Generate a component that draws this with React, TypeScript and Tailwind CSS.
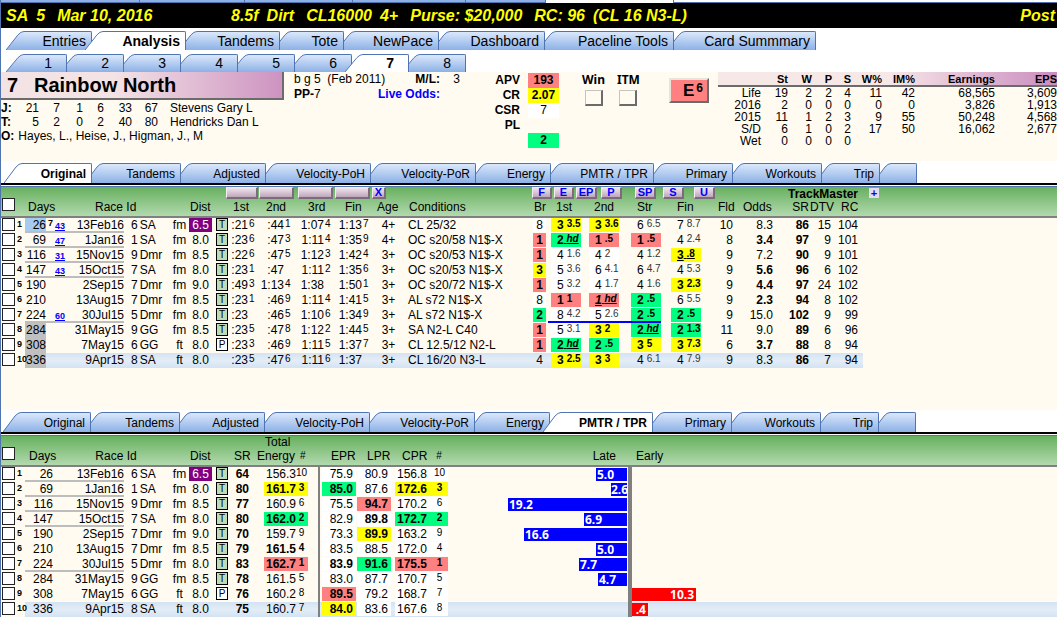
import React from "react";

const NAVY = "#4f74b0";

type TabDef = { label: string; width: string };

function Tabs({ tabs, active, size, name, textPad }: { tabs: TabDef[]; active: string; size: string; name: string; textPad: string }) {
  return (
    <nav aria-label={name} className="flex">
      {tabs.map((t, i) => {
        const on = t.label === active;
        return (
          <button
            key={i}
            type="button"
            aria-label={t.label || "More"}
            className={`relative flex shrink-0 ${i ? "-ml-[7px]" : ""} ${size} ${t.width} ${on ? "font-bold" : ""}`}
            style={{ zIndex: on ? 30 : 20 - i }}
          >
            <svg className="h-full w-[18px] shrink-0" viewBox="0 0 18 20" preserveAspectRatio="none" aria-hidden="true">
              <defs>
                <linearGradient id={`${name}-${i}`} x1="0" y1="0" x2="0" y2="1">
                  <stop offset="0" stopColor={on ? "#ffffff" : "#dbe8fb"} />
                  <stop offset="1" stopColor={on ? "#ffffff" : "#8db1e6"} />
                </linearGradient>
              </defs>
              <path d="M0 20 L12 4 Q15 .5 18 .5 V20 Z" fill={`url(#${name}-${i})`} />
              <path d="M0 20 L12 4 Q15 .5 18 .5" fill="none" stroke={NAVY} strokeWidth="1" />
            </svg>
            <span
              className={`flex h-full flex-1 items-center justify-end whitespace-nowrap rounded-tr-[2px] border-r border-t border-[#4f74b0] ${textPad} ${
                on ? "bg-white" : "bg-gradient-to-b from-[#dbe8fb] to-[#8db1e6]"
              }`}
            >
              {t.label}
            </span>
          </button>
        );
      })}
    </nav>
  );
}

const mainTabs: TabDef[] = [
  { label: "Entries", width: "w-[86px]" },
  { label: "Analysis", width: "w-[101px]" },
  { label: "Tandems", width: "w-[101px]" },
  { label: "Tote", width: "w-[71px]" },
  { label: "NewPace", width: "w-[102px]" },
  { label: "Dashboard", width: "w-[113px]" },
  { label: "Paceline Tools", width: "w-[136px]" },
  { label: "Card Summmary", width: "w-[149px]" },
];

const horseTabs: TabDef[] = ["1", "2", "3", "4", "5", "6", "7", "8"].map((n, i) => ({ label: n, width: i ? "w-[64px]" : "w-[61px]" }));

const viewTabs: TabDef[] = [
  { label: "Original", width: "w-[88px]" },
  { label: "Tandems", width: "w-[96px]" },
  { label: "Adjusted", width: "w-[92px]" },
  { label: "Velocity-PoH", width: "w-[112px]" },
  { label: "Velocity-PoR", width: "w-[112px]" },
  { label: "Energy", width: "w-[82px]" },
  { label: "PMTR / TPR", width: "w-[110px]" },
  { label: "Primary", width: "w-[86px]" },
  { label: "Workouts", width: "w-[96px]" },
  { label: "Trip", width: "w-[65px]" },
  { label: "", width: "w-[44px]" },
];

type Tone = "r" | "g" | "y" | "w" | "";
const toneClass: Record<Tone, string> = {
  r: "bg-[#ff8080] font-bold",
  g: "bg-[#00ff80] font-bold",
  y: "bg-[#ffff00] font-bold",
  w: "bg-white",
  "": "",
};

type Race = {
  days: string;
  note: string;
  date: string;
  trk: string;
  surf: string;
  dist: string;
  kind: string;
  times: string[];
  age: string;
  cond: string;
  calls: string[];
  fld: string;
  odds: string;
  sr: string;
  dtv: string;
  rc: string;
  line: boolean;
};

function race(s: string): Race {
  const [days, note, date, trk, surf, dist, kind, times, age, cond, calls, fld, odds, sr, dtv, rc, line] = s.split("|");
  return { days, note, date, trk, surf, dist, kind, times: times.split(","), age, cond, calls: calls.split(","), fld, odds, sr, dtv, rc, line: line === "1" };
}

// Calls are written as tone:position:lengths, with an optional fourth part for underlining.
const races: Race[] = [
  "26|43|13Feb16|6 SA|fm|6.5|T|:21 6,:44 1,1:07 4,1:13 7|4+|CL 25/32|w:8,y:3:3.5,y:3:3.6,:6:6.5,:7:8.7|10|8.3|86|15|104|1",
  "69|47|1Jan16|1 SA|fm|8.0|T|:23 6,:47 3,1:11 4,1:35 9|4+|OC s20/58 N1$-X|r:1,g:2:hd:u,r:1:.5,r:1:.5,:4:2.4|8|*3.4|97|9|101|1",
  "116|31|15Nov15|9 Dmr|fm|8.5|T|:22 6,:47 5,1:12 3,1:42 4|3+|OC s20/53 N1$-X|r:1,w:4:1.6,w:4:2,:4:1.2,y:3:.8:n|9|7.2|90|9|101|1",
  "147|43|15Oct15|7 SA|fm|8.0|T|:23 1,:47 ,1:11 2,1:35 6|3+|OC s20/53 N1$-X|y:3,w:5:3.6,w:6:4.1,:6:4.7,:4:5.3|9|*5.6|96|6|102|1",
  "190||2Sep15|7 Dmr|fm|9.0|T|:49 3,1:13 4,1:38 ,1:50 1|3+|OC s20/72 N1$-X|r:1,w:5:3.2,w:4:1.7,:4:1.6,y:3:2.3|9|*4.4|97|24|102|",
  "210||13Aug15|7 Dmr|fm|8.5|T|:23 1,:46 9,1:11 4,1:41 5|3+|AL s72 N1$-X|w:8,r:1:1,r:1:hd:i,g:2:.5,:6:5.5|9|*2.3|94|8|102|",
  "224|60|30Jul15|5 Dmr|fm|8.0|T|:23 ,:46 5,1:10 6,1:34 9|3+|AL s72 N1$-X|g:2,w:8:4.2,w:5:2.6,g:2:.5,g:2:.5|9|15.0|102|9|99|1",
  "284||31May15|9 GG|fm|8.5|T|:23 5,:47 8,1:12 2,1:44 5|3+|SA N2-L C40|r:1,w:5:3.1,y:3:2,g:2:hd:u,g:2:1.3|11|9.0|89|6|96|",
  "308||7May15|6 GG|ft|8.0|P|:23 3,:46 9,1:11 5,1:37 7|3+|CL 12.5/12 N2-L|r:1,g:2:hd:u,g:2:.5,y:3:5,y:3:7.3|6|*3.7|88|8|94|",
  "336||9Apr15|8 SA|ft|8.0||:23 5,:47 6,1:11 6,1:37 |3+|CL 16/20 N3-L|:4,y:3:2.5,y:3:3,:4:6.1,:4:7.9|9|8.3|86|7|94|",
].map(race);

type Fig = { sr: string; te: string; rk: string; tt: Tone; tb?: boolean; epr: string; et: Tone; eb?: boolean; lpr: string; lt: Tone; lb?: boolean; cpr: string; ct: Tone; cr: string; late?: string; early?: string };
const figs: Fig[] = [
  { sr: "64", te: "156.3", rk: "10", tt: "", epr: "75.9", et: "w", lpr: "80.9", lt: "w", cpr: "156.8", ct: "w", cr: "10", late: "5.0" },
  { sr: "80", te: "161.7", rk: "3", tt: "y", epr: "85.0", et: "g", lpr: "87.6", lt: "w", cpr: "172.6", ct: "y", cr: "3", late: "2.6" },
  { sr: "77", te: "160.9", rk: "6", tt: "", epr: "75.5", et: "w", lpr: "94.7", lt: "r", cpr: "170.2", ct: "w", cr: "6", late: "19.2" },
  { sr: "80", te: "162.0", rk: "2", tt: "g", epr: "82.9", et: "w", lpr: "89.8", lt: "w", lb: true, cpr: "172.7", ct: "g", cr: "2", late: "6.9" },
  { sr: "70", te: "159.7", rk: "9", tt: "", epr: "73.3", et: "w", lpr: "89.9", lt: "y", cpr: "163.2", ct: "w", cr: "9", late: "16.6" },
  { sr: "79", te: "161.5", rk: "4", tt: "", tb: true, epr: "83.5", et: "w", lpr: "88.5", lt: "w", cpr: "172.0", ct: "w", cr: "4", late: "5.0" },
  { sr: "83", te: "162.7", rk: "1", tt: "r", epr: "83.9", et: "w", eb: true, lpr: "91.6", lt: "g", cpr: "175.5", ct: "r", cr: "1", late: "7.7" },
  { sr: "78", te: "161.5", rk: "5", tt: "", epr: "83.0", et: "w", lpr: "87.7", lt: "w", cpr: "170.7", ct: "w", cr: "5", late: "4.7" },
  { sr: "76", te: "160.2", rk: "8", tt: "", epr: "89.5", et: "r", lpr: "79.2", lt: "w", cpr: "168.7", ct: "w", cr: "7", early: "10.3" },
  { sr: "75", te: "160.7", rk: "7", tt: "", epr: "84.0", et: "y", lpr: "83.6", lt: "w", cpr: "167.6", ct: "w", cr: "8", early: ".4" },
];

const STRIPE = "bg-gradient-to-b from-[#d3e3f3] via-[#e4edf7] to-[#d3e3f3]";

function Check({ label }: { label: string }) {
  return <input type="checkbox" aria-label={label} className="ml-px block size-[13px] appearance-none border border-[#222] bg-white checked:bg-[#4f74b0]" />;
}

function Td({ children, line = "", className = "", stripe = false }: { children?: React.ReactNode; line?: string; className?: string; stripe?: boolean }) {
  return (
    <td className={`whitespace-nowrap p-0 align-top leading-[15px] ${line ? `border-b-2 ${line}` : ""} ${stripe ? STRIPE : ""} ${className}`}>
      <div className={line ? "h-[13px]" : "h-[15px]"}>{children}</div>
    </td>
  );
}

const GREY_LINE = "border-[#bdbdbd]";

function LeadCells({ r, i, stripe, notes }: { r: Race; i: number; stripe: boolean; notes: boolean }) {
  const line = r.line ? GREY_LINE : "";
  const shade = notes ? (i === 0 ? "bg-[#a6caf0]" : i >= 7 ? "bg-[#c0c0c0]" : "") : "";
  return (
    <>
      <Td><Check label={`Select race ${i + 1}`} /></Td>
      <Td className="text-[9px] font-bold"><span className="relative ml-px block leading-[13px]">{i + 1}</span></Td>
      <Td line={line} stripe={stripe} className="text-right"><span className={`block h-full ${shade}`}>{r.days}</span></Td>
      {notes && (
        <Td line={line} stripe={stripe}>
          <span className="flex h-full items-start justify-between pl-0.5 pr-0.5">
            <sup className="top-0 text-[9px] font-bold leading-[11px]">{i === 0 ? "7" : ""}</sup>
            {r.note && <a href="#related" className="pt-1 text-[9px] font-bold leading-[9px] text-[#0000ff] underline">{r.note}</a>}
          </span>
        </Td>
      )}
      <Td line={line} stripe={stripe} className="text-right">{r.date}</Td>
      <Td stripe={stripe}>
        <span className="flex gap-0.5 pl-[7px]"><span>{r.trk.split(" ")[0]}</span><span>{r.trk.split(" ")[1]}</span></span>
      </Td>
      <Td stripe={stripe} className="text-center">{r.surf}</Td>
      <Td stripe={stripe}>
        <span className={`mx-px block text-center ${r.dist === "6.5" ? "h-[14px] bg-[#800080] text-white" : ""}`}>{r.dist}</span>
      </Td>
      <Td stripe={stripe}>
        {r.kind && (
          <span className={`ml-[3px] block h-[13px] w-3 border border-black text-center text-[10px] leading-[11px] ${r.kind === "T" ? "bg-[#bcdcb8]" : "bg-white"}`}>{r.kind}</span>
        )}
      </Td>
    </>
  );
}

function Time({ t, w }: { t: string; w: string }) {
  const [a, b] = t.split(" ");
  return (
    <span className="flex">
      <span className={`text-right ${w}`}>{a}</span>
      <sup className="top-0 ml-px text-[10px] leading-[12px]">{b}</sup>
    </span>
  );
}

function Call({ c, line, pad }: { c: string; line: boolean; pad: string }) {
  const [tone, main, len, u] = c.split(":");
  const underline = u ? "underline" : "";
  return (
    <span className={`block h-full ${pad}`}>
      <span className={`flex w-[30px] pl-1.5 ${line ? "h-[13px]" : "h-[14px]"} ${toneClass[tone as Tone]}`}>
        <span className={u === "i" ? "italic underline" : u === "n" ? "underline" : ""}>{main}</span>
        <sup className={`top-0 whitespace-pre text-[10px] leading-[12px] ${underline} ${len === "hd" ? "italic" : ""} ${u ? "" : "ml-[3px]"} ${tone && tone !== "w" ? "text-black" : "text-[#333]"}`}>
          {u ? " " : ""}{len}
        </sup>
      </span>
    </span>
  );
}

function Th({ children, className = "", span = 1 }: { children?: React.ReactNode; className?: string; span?: number }) {
  return <th scope="col" colSpan={span} className={`h-[18px] whitespace-nowrap border-b-2 border-[#808080] p-0 text-left align-top font-normal leading-[14px] ${className}`}>{children}</th>;
}

function Chip({ children, className = "", label }: { children?: React.ReactNode; className?: string; label: string }) {
  return (
    <button type="button" aria-label={label} className={`flex h-3 shrink-0 items-center justify-center border-b-2 border-r-2 border-l border-t border-b-[#7b6b7b] border-r-[#7b6b7b] border-l-[#f4eef4] border-t-[#f4eef4] bg-gradient-to-b from-[#f0e6ee] to-[#bfa6bb] text-[11px] font-bold leading-[9px] text-[#0000ff] ${className}`}>
      {children}
    </button>
  );
}

const TABLE = "w-full table-fixed border-separate border-spacing-0";
const THEAD = "bg-gradient-to-b from-[#66b05e] to-[#b7dcb3]";

function OriginalTable() {
  const cols = ["w-[15px]", "w-[9px]", "w-[21px]", "w-[21px]", "w-[57px]", "w-[47px]", "w-[17px]", "w-[25px]", "w-[16px]", "w-[27px]", "w-[40px]", "w-[39px]", "w-[40px]", "w-[27px]", "w-[130px]", "w-[16px]", "w-[36px]", "w-[37px]", "w-[40px]", "w-[45px]", "w-[27px]", "w-[41px]", "w-[35px]", "w-[22px]", "w-[32px]", ""];
  const callPads = ["pl-[3px]", "pl-[5px]", "pl-[10px]", "pl-[10px]"];
  return (
    <table className={TABLE}>
      <colgroup>{cols.map((c, i) => <col key={i} className={c} />)}</colgroup>
      <thead className={THEAD}>
        <tr>
          <th rowSpan={2} className="border-b-2 border-[#808080] p-0 pt-1.5 align-middle"><Check label="Select all races" /></th>
          <th colSpan={25} className="h-[13px] p-0 align-top font-bold">
            <div className="flex h-[13px] items-start pl-[210px]">
              <Chip label="Sort by first fraction" className="w-8" />
              <Chip label="Sort by second fraction" className="ml-px w-[35px]" />
              <Chip label="Sort by third fraction" className="ml-1 w-[35px]" />
              <Chip label="Sort by final time" className="ml-0.5 w-[35px]" />
              <Chip label="X" className="ml-0.5 w-3.5">X</Chip>
              <Chip label="F" className="ml-[146px] w-5">F</Chip>
              <Chip label="E" className="ml-0.5 w-5">E</Chip>
              <Chip label="EP" className="ml-0.5 w-[21px]">EP</Chip>
              <Chip label="P" className="ml-1 w-[21px]">P</Chip>
              <Chip label="SP" className="ml-[13px] w-[21px]">SP</Chip>
              <Chip label="S" className="ml-[7px] w-[21px]">S</Chip>
              <Chip label="U" className="ml-2.5 w-[21px]">U</Chip>
              <span className="ml-[73px] leading-[15px]">TrackMaster</span>
              <button type="button" aria-label="Add column" className="ml-[11px] mt-px flex size-[10px] items-center justify-center bg-[#e4dcec] text-[11px] font-bold leading-none text-[#0000ff]">+</button>
            </div>
          </th>
        </tr>
        <tr>
          <Th />
          <Th span={2} className="pl-[3px]">Days</Th>
          <Th span={2} className="pl-7">Race Id</Th>
          <Th />
          <Th className="pl-0.5">Dist</Th>
          <Th />
          <Th className="pl-1">1st</Th>
          <Th className="pl-2.5">2nd</Th>
          <Th className="pl-3">3rd</Th>
          <Th className="pl-2.5">Fin</Th>
          <Th className="pl-0.5">Age</Th>
          <Th className="pl-[7px]">Conditions</Th>
          <Th className="pl-0.5">Br</Th>
          <Th className="pl-2">1st</Th>
          <Th className="pl-2.5">2nd</Th>
          <Th className="pl-4">Str</Th>
          <Th className="pl-4">Fin</Th>
          <Th className="pl-3">Fld</Th>
          <Th className="pl-2.5">Odds</Th>
          <Th className="text-right">SR</Th>
          <Th className="pl-px">DTV</Th>
          <Th className="pl-2.5">RC</Th>
          <Th />
        </tr>
      </thead>
      <tbody>
        {races.map((r, i) => {
          const stripe = i === 9;
          const blue = i === 6 ? "border-[#0000ff]" : "";
          const [bt, bv] = r.calls[0].split(":");
          const best = r.odds.startsWith("*");
          return (
            <tr key={i}>
              <LeadCells r={r} i={i} stripe={stripe} notes />
              <Td stripe={stripe}><Time t={r.times[0]} w="w-[19px]" /></Td>
              <Td stripe={stripe}><Time t={r.times[1]} w="w-7" /></Td>
              <Td stripe={stripe}><Time t={r.times[2]} w="w-7" /></Td>
              <Td stripe={stripe}><Time t={r.times[3]} w="w-[27px]" /></Td>
              <Td stripe={stripe} className="text-center">{r.age}</Td>
              <Td stripe={stripe} className="pl-1.5">{r.cond}</Td>
              <Td stripe={stripe}><span className={`ml-px block h-[14px] w-[13px] text-center ${toneClass[bt as Tone]}`}>{bv}</span></Td>
              {r.calls.slice(1).map((c, k) => (
                <Td key={k} stripe={stripe} line={k < 3 ? blue : ""}><Call c={c} line={k < 3 && blue !== ""} pad={callPads[k]} /></Td>
              ))}
              <Td stripe={stripe} className="text-right">{r.fld}</Td>
              <Td stripe={stripe} className={`pr-px text-right ${best ? "font-bold" : ""}`}>{r.odds.replace("*", "")}</Td>
              <Td stripe={stripe} className="text-right font-bold">{r.sr}</Td>
              <Td stripe={stripe} className="text-right">{r.dtv}</Td>
              <Td stripe={stripe} className="pr-[5px] text-right">{r.rc}</Td>
              <Td />
            </tr>
          );
        })}
      </tbody>
    </table>
  );
}

function barWidth(v: string) {
  return `${Math.max(16, Math.round(Number(v) * 6.2))}px`;
}

const BAR_TEXT = "font-['Noto_Sans'] text-[12px] font-bold leading-[13px] text-white";

function EnergyTable() {
  const cols = ["w-[15px]", "w-[9px]", "w-[28px]", "w-[71px]", "w-[47px]", "w-[17px]", "w-[25px]", "w-[16px]", "w-[20px]", "w-[69px]", "w-[38px]", "w-[36px]", "w-[56px]", "w-[184px]", ""];
  return (
    <table className={TABLE}>
      <colgroup>{cols.map((c, i) => <col key={i} className={c} />)}</colgroup>
      <thead className={THEAD}>
        <tr>
          <th rowSpan={2} className="border-b-2 border-[#808080] p-0 pt-1.5 align-middle"><Check label="Select all races" /></th>
          <th colSpan={8} className="p-0" />
          <th className="h-[13px] p-0 pl-4 text-left align-top font-normal leading-[13px]">Total</th>
          <th colSpan={5} className="p-0" />
        </tr>
        <tr>
          <Th />
          <Th span={2} className="pl-1"><span className="flex"><span>Days</span><span className="ml-[39px]">Race Id</span></span></Th>
          <Th span={2} />
          <Th className="pl-0.5">Dist</Th>
          <Th />
          <Th className="pl-[5px]">SR</Th>
          <Th className="pl-2"><span className="flex"><span>Energy</span><sup className="top-0 ml-[5px] text-[10px] leading-[13px]">#</sup></span></Th>
          <Th className="pl-[13px]">EPR</Th>
          <Th className="pl-[11px]">LPR</Th>
          <Th className="pl-2.5"><span className="flex"><span>CPR</span><sup className="top-0 ml-[9px] text-[10px] leading-[13px]">#</sup></span></Th>
          <Th className="pr-4 text-right">Late</Th>
          <Th className="pl-1">Early</Th>
        </tr>
      </thead>
      <tbody>
        {races.map((r, i) => {
          const stripe = i === 9;
          const f = figs[i];
          return (
            <tr key={i}>
              <LeadCells r={r} i={i} stripe={stripe} notes={false} />
              <Td stripe={stripe} className="text-right font-bold">{f.sr}</Td>
              <Td stripe={stripe}>
                <span className={`ml-[15px] flex h-[14px] w-11 justify-between pl-0.5 pr-[3px] ${toneClass[f.tt]} ${f.tb ? "font-bold" : ""}`}>
                  <span>{f.te}</span>
                  <sup className="top-0 -mr-0.5 w-[11px] text-center text-[10px] leading-[12px]">{f.rk}</sup>
                </span>
              </Td>
              <Td stripe={stripe} className="border-l-2 border-[#808080] text-right">
                <span className={`ml-0.5 block h-[14px] pr-[3px] ${toneClass[f.et]} ${f.eb ? "font-bold" : ""}`}>{f.epr}</span>
              </Td>
              <Td stripe={stripe} className="text-right">
                <span className={`mx-px block h-[14px] pr-[3px] ${toneClass[f.lt]} ${f.lb ? "font-bold" : ""}`}>{f.lpr}</span>
              </Td>
              <Td stripe={stripe} className="text-right">
                <span className={`ml-[3px] flex h-[14px] justify-between pl-0.5 pr-[3px] ${toneClass[f.ct]}`}>
                  <span>{f.cpr}</span>
                  <sup className="top-0 w-[11px] text-center text-[10px] leading-[12px]">{f.cr}</sup>
                </span>
              </Td>
              <Td stripe={stripe} className="border-r-4 border-[#808080]">
                {f.late && (
                  <span className="flex h-full items-center justify-end pr-px">
                    <span className={`h-[13px] bg-[#0000ff] ${BAR_TEXT} ${f.late === "2.6" ? "" : "pl-px"}`} style={{ width: barWidth(f.late) }}>{f.late}</span>
                  </span>
                )}
              </Td>
              <Td stripe={stripe}>
                {f.early && (
                  <span className="flex h-full items-center">
                    <span className={`h-[13px] bg-[#ff0000] pr-0.5 text-right ${BAR_TEXT}`} style={{ width: barWidth(f.early) }}>{f.early}</span>
                  </span>
                )}
              </Td>
            </tr>
          );
        })}
      </tbody>
    </table>
  );
}

function View({ name, active, indent, children }: { name: string; active: string; indent: string; children: React.ReactNode }) {
  return (
    <section>
      <div className={`border-b-2 border-black bg-white pt-0.5 ${indent}`}>
        <Tabs tabs={viewTabs} active={active} size="h-5 text-[12px]" name={name} textPad="pr-[5px]" />
      </div>
      <div className="border-b border-[#4f74b0] bg-white pt-px" />
      {children}
    </section>
  );
}

const record = [
  ["Life", "19", "2", "2", "4", "11", "42", "68,565", "3,609"],
  ["2016", "2", "0", "0", "0", "0", "0", "3,826", "1,913"],
  ["2015", "11", "1", "2", "3", "9", "55", "50,248", "4,568"],
  ["S/D", "6", "1", "0", "2", "17", "50", "16,062", "2,677"],
  ["Wet", "0", "0", "0", "0", "", "", "", ""],
];

const people = [
  ["J:", "21", "7", "1", "6", "33", "67", "Stevens Gary L"],
  ["T:", "5", "2", "0", "2", "40", "80", "Hendricks Dan L"],
];

const ratings: [string, string, string][] = [
  ["APV", "193", "bg-[#ff8080] font-bold"],
  ["CR", "2.07", "bg-[#ffff00] font-bold"],
  ["CSR", "7", "bg-white"],
  ["PL", "", ""],
  ["", "2", "bg-[#00ff80] font-bold"],
];

function HorsePanel() {
  const pw = ["w-[16px]", "w-[22px]", "w-[21px]", "w-[23px]", "w-[21px]", "w-[28px]", "w-[26px]", ""];
  const rw = ["w-[43px]", "w-[27px]", "w-[24px]", "w-[20px]", "w-[19px]", "w-[31px]", "w-[33px]", "w-[80px]", "w-[62px]"];
  return (
    <section className="flex min-h-[89px] items-start">
      <div className="w-[283px] shrink-0">
        <h1 className="flex h-7 items-center border-b-2 border-r-2 border-[#6b6b6b] bg-gradient-to-r from-[#f3e3e5] from-40% to-[#cd93c1] pl-1.5 text-[20px] font-bold">
          <span className="w-[27px]">7</span>
          <span>Rainbow North</span>
        </h1>
        <table className="mt-px w-full table-fixed border-separate border-spacing-0">
          <colgroup>{pw.map((c, i) => <col key={i} className={c} />)}</colgroup>
          <tbody>
            {people.map((p) => (
              <tr key={p[0]}>
                {p.map((v, i) => (
                  <td key={i} className={`whitespace-nowrap p-0 leading-[14px] ${i === 0 ? "font-bold" : i === 7 ? "pl-3" : "text-right"}`}>{v}</td>
                ))}
              </tr>
            ))}
          </tbody>
        </table>
        <p className="flex gap-1 whitespace-nowrap leading-[14px]"><b>O:</b><span>Hayes, L., Heise, J., Higman, J., M</span></p>
      </div>

      <div className="ml-2.5 grid shrink-0 grid-cols-[96px_50px_20px] gap-x-0 leading-[15px]">
        <span className="whitespace-nowrap">b g 5&nbsp; (Feb 2011)</span>
        <b className="text-right">M/L:</b>
        <span className="text-right">3</span>
        <span><b>PP-</b>7</span>
        <b className="flex justify-end whitespace-nowrap text-[#0000ff]">Live Odds:</b>
      </div>

      <dl className="ml-[34px] mt-px grid shrink-0 grid-cols-[26px_31px] gap-x-2 leading-[15px]">
        {ratings.map(([k, v, c], i) => (
          <React.Fragment key={i}>
            <dt className="text-right font-bold">{k}</dt>
            <dd className={`h-[15px] text-center ${c}`}>{v}</dd>
          </React.Fragment>
        ))}
      </dl>

      <div className="ml-[23px] mt-px flex shrink-0 gap-3 font-['Noto_Sans'] text-[12px] font-bold leading-[14px]">
        {["Win", "ITM"].map((l) => (
          <label key={l} className="flex flex-col items-center gap-[3px]">
            {l}
            <input type="checkbox" className="h-4 w-[18px] appearance-none border border-b-2 border-r-2 border-[#c8c4bc] border-b-[#6b6b6b] border-r-[#6b6b6b] bg-[#fffbf0]" />
          </label>
        ))}
      </div>

      <button type="button" aria-label="E 6 running style" className="ml-[29px] mt-1.5 flex h-[25px] w-10 shrink-0 justify-center border-2 border-[#e8e4dc] border-b-[#6b6b6b] border-r-[#6b6b6b] bg-[#ff8080] pl-2 font-bold">
        <span className="text-[17px] leading-[21px]">E</span>
        <sup className="top-0 ml-0.5 text-[12px] leading-[16px]">6</sup>
      </button>

      <table className="ml-auto w-[339px] shrink-0 table-fixed border-separate border-spacing-0 text-right">
        <colgroup>{rw.map((c, i) => <col key={i} className={c} />)}</colgroup>
        <thead className="bg-gradient-to-r from-[#f7e8e8] from-50% to-[#c98dbf]">
          <tr className="text-[11px] leading-[12px]">
            {["", "St", "W", "P", "S", "W%", "IM%", "Earnings", "EPS"].map((h, i) => (
              <th key={i} scope="col" className="whitespace-nowrap border-b-2 border-[#6b6b6b] p-0 pt-px text-right font-bold">{h}</th>
            ))}
          </tr>
        </thead>
        <tbody className="leading-[12px]">
          {record.map((r) => (
            <tr key={r[0]}>{r.map((v, i) => <td key={i} className="p-0">{v}</td>)}</tr>
          ))}
        </tbody>
      </table>
    </section>
  );
}

export default function App() {
  return (
    <main className="min-h-screen overflow-x-hidden border-l border-[#4f74b0] bg-[#fffbf0] font-['Liberation_Sans',Arial,sans-serif] text-[12px] text-black">
      <div className="flex h-[3px] bg-white">
        {["w-[139px]", "w-[105px]", "w-[108px]", "w-[113px]", "w-[80px]"].map((w) => (
          <span key={w} className={`border-b border-r border-[#4f74b0] bg-[#8db1e6] ${w}`} />
        ))}
        <span className="w-[127px]" />
        <span className="flex-1 border-b border-l border-[#4f74b0]" />
      </div>
      <header className="flex h-[25px] items-center whitespace-nowrap bg-black pl-[5px] text-[16px] font-bold italic text-[#ffff00]">
        <div className="flex w-[225px] gap-3">
          <span className="flex gap-2"><span>SA</span><span>5</span></span>
          <span>Mar 10, 2016</span>
        </div>
        <div className="flex gap-3">
          <span className="flex gap-2"><span>8.5f</span><span>Dirt</span></span>
          <span className="flex gap-2"><span>CL16000</span><span>4+</span></span>
          <span>Purse: $20,000</span>
          <span className="flex gap-2"><span>RC: 96</span><span>(CL 16 N3-L)</span></span>
        </div>
        <span className="ml-auto pr-0.5">Post</span>
      </header>
      <div className="bg-white pl-[5px] pt-[3px]">
        <Tabs tabs={mainTabs} active="Analysis" size="h-[19px] text-[14px]" name="main" textPad="pr-[5px]" />
        <div className="pt-1">
          <Tabs tabs={horseTabs} active="7" size="h-[18px] text-[14px]" name="horses" textPad="pr-[14px]" />
        </div>
      </div>
      <HorsePanel />
      <div className="flex flex-col gap-[42px]">
        <View name="history" active="Original" indent="pl-[3px]"><OriginalTable /></View>
        <View name="figures" active="PMTR / TPR" indent="pl-0.5"><EnergyTable /></View>
      </div>
    </main>
  );
}
